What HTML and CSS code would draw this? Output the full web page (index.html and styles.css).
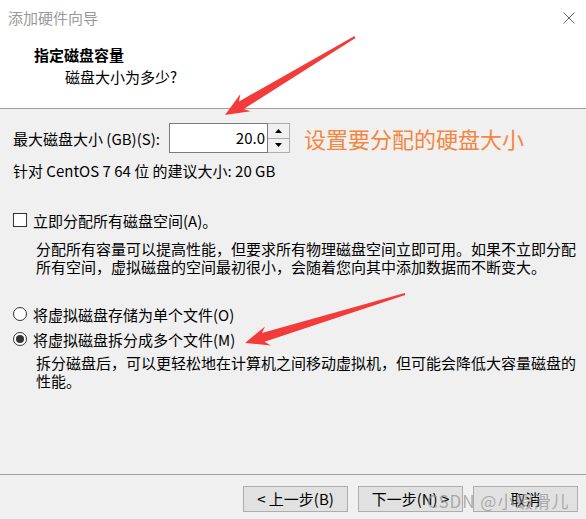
FILE: index.html
```html
<!DOCTYPE html>
<html lang="zh-CN">
<head>
    <meta charset="UTF-8">
    <title>添加硬件向导</title>
    <link rel="stylesheet" href="styles.css">
</head>
<body>
    <div class="window">
        <div class="header">
            <div class="titlebar">
                <span class="title">添加硬件向导</span>
                <svg class="close" width="12" height="12" viewBox="0 0 12 12">
                    <path d="M0.5 0.5 L11.5 11.5 M11.5 0.5 L0.5 11.5" stroke="#666" stroke-width="1" fill="none"/>
                </svg>
            </div>
            <div class="heading">指定磁盘容量</div>
            <div class="subheading">磁盘大小为多少?</div>
        </div>

        <div class="content">
            <div class="size-row">
                <label class="size-label">最大磁盘大小 (GB)(S):</label>
                <div class="spinbox">
                    <div class="spin-value">20.0</div>
                    <div class="spin-buttons">
                        <button type="button">
                            <svg width="7" height="4" viewBox="0 0 7 4"><path d="M3.5 0 L7 4 L0 4 Z" fill="#000"/></svg>
                        </button>
                        <button type="button">
                            <svg width="7" height="4" viewBox="0 0 7 4"><path d="M0 0 L7 0 L3.5 4 Z" fill="#000"/></svg>
                        </button>
                    </div>
                </div>
                <span class="note">设置要分配的硬盘大小</span>
            </div>
            <div class="hint">针对 CentOS 7 64 位 的建议大小: 20 GB</div>

            <div class="option checkbox-option">
                <span class="checkbox"></span>
                <span>立即分配所有磁盘空间(A)。</span>
            </div>
            <p class="desc">分配所有容量可以提高性能，但要求所有物理磁盘空间立即可用。如果不立即分配所有空间，虚拟磁盘的空间最初很小，会随着您向其中添加数据而不断变大。</p>

            <div class="option radio-option first">
                <span class="radio"></span>
                <span>将虚拟磁盘存储为单个文件(O)</span>
            </div>
            <div class="option radio-option">
                <span class="radio checked"></span>
                <span>将虚拟磁盘拆分成多个文件(M)</span>
            </div>
            <p class="desc tight">拆分磁盘后，可以更轻松地在计算机之间移动虚拟机，但可能会降低大容量磁盘的性能。</p>
        </div>

        <div class="footer">
            <button type="button" class="btn">&lt; 上一步(B)</button>
            <button type="button" class="btn">下一步(N) &gt;</button>
            <button type="button" class="btn">取消</button>
        </div>

        <!-- annotation arrows drawn over the dialog -->
        <svg class="arrows" width="586" height="519" viewBox="0 0 586 519">
            <polygon points="355.5,37.9 243.6,109.1 250.7,111.2 225,115 240.4,94.1 239.0,101.4 354.5,36.1" fill="#f43b3b"/>
            <polygon points="405.3,295.0 264.5,341.7 270.9,345.5 245,343 265.0,326.4 261.9,333.1 404.7,293.0" fill="#f43b3b"/>
        </svg>
        <div class="watermark">CSDN @小蝦滑儿</div>
    </div>
</body>
</html>
```

FILE: styles.css
```css
* {
    box-sizing: border-box;
}
body {
    margin: 0;
    font-family: "Noto Sans CJK SC", "Microsoft YaHei", sans-serif;
    font-size: 15px;
    color: #000;
    background: #f0f0f0;
}
.window {
    position: relative;
    width: 586px;
    height: 519px;
    display: flex;
    flex-direction: column;
    overflow: hidden;
}
.header {
    background: #fff;
    height: 109px;
    border-bottom: 1px solid #a0a0a0;
}
.titlebar {
    height: 36px;
    display: flex;
    align-items: center;
    justify-content: space-between;
    padding: 0 11px 0 8px;
}
.title {
    color: #999;
    line-height: 36px;
}
.heading {
    font-weight: bold;
    line-height: 20px;
    margin: 9px 0 0 34px;
}
.subheading {
    line-height: 20px;
    margin: 2px 0 0 65px;
}
.content {
    flex: 1;
    padding: 14px 0 0 13px;
}
.size-row {
    display: flex;
    align-items: center;
    height: 30px;
}
.size-label {
    width: 156px;
}
.spinbox {
    display: flex;
    height: 30px;
}
.spin-value {
    width: 99px;
    border: 1px solid #7a7a7a;
    background: #fff;
    text-align: right;
    padding-right: 2px;
    line-height: 28px;
}
.spin-buttons {
    width: 22px;
    display: flex;
    flex-direction: column;
    border: 1px solid #adadad;
    border-left: none;
}
.spin-buttons button {
    flex: 1;
    border: none;
    padding: 0;
    background: #f0f0f0;
    display: flex;
    align-items: center;
    justify-content: center;
}
.spin-buttons button + button {
    border-top: 1px solid #adadad;
}
.note {
    margin-left: 14px;
    font-size: 22px;
    line-height: 30px;
    color: #f4873f;
}
.hint {
    margin-top: 8px;
    line-height: 20px;
}
.option {
    display: flex;
    align-items: center;
    gap: 6px;
    height: 20px;
}
.checkbox-option {
    margin-top: 29px;
}
.checkbox {
    width: 14px;
    height: 14px;
    border: 1px solid #333;
    background: #fff;
}
.desc {
    margin: 10px 0 0 23px;
    line-height: 18px;
}
.desc.tight {
    margin-top: 5px;
}
.radio-option.first {
    margin-top: 28px;
}
.option + .option {
    margin-top: 5px;
}
.radio {
    width: 14px;
    height: 14px;
    border: 1px solid #333;
    border-radius: 50%;
    background: #fff;
    display: flex;
    align-items: center;
    justify-content: center;
}
.radio.checked::after {
    content: "";
    width: 8px;
    height: 8px;
    border-radius: 50%;
    background: #333;
}
.footer {
    height: 45px;
    border-top: 1px solid #a0a0a0;
    display: flex;
    justify-content: flex-end;
    gap: 10px;
    padding: 11px 8px 0 0;
}
.btn {
    width: 105px;
    height: 26px;
    border: 1px solid #adadad;
    background: #e1e1e1;
    font-family: inherit;
    font-size: 15px;
    line-height: 22px;
    color: #000;
    padding: 0;
}
.arrows {
    position: absolute;
    left: 0;
    top: 0;
    pointer-events: none;
}
.watermark {
    position: absolute;
    left: 427px;
    top: 488px;
    font-size: 17px;
    letter-spacing: 1px;
    color: rgba(150, 150, 150, 0.75);
    pointer-events: none;
}
```
